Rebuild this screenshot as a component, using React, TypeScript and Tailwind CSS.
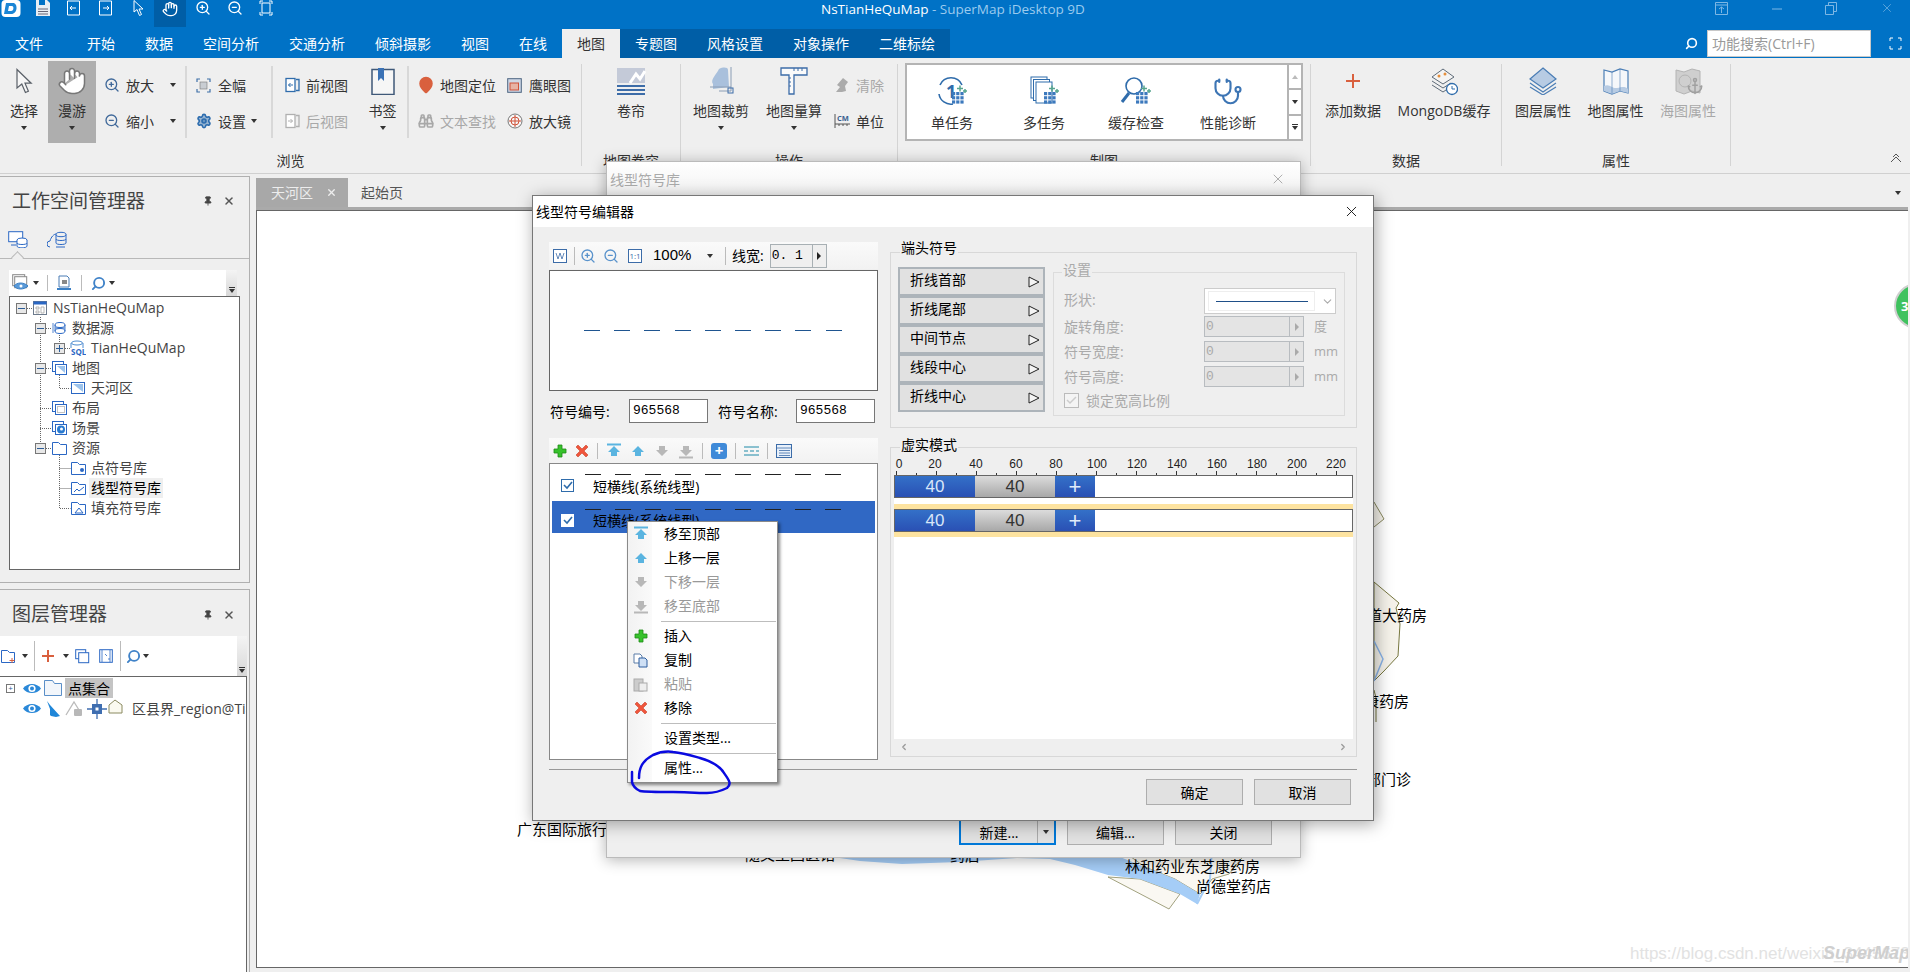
import type { ReactNode } from 'react';
import { Anchor, Binoculars, ChevronDown, ChevronLeft, ChevronRight, Hand, MapPin, Pin, Search, Settings, Stethoscope, X, ZoomIn, ZoomOut } from 'lucide-react';

function Caret({ white }: { white?: boolean }) {
  return <span className={`inline-block h-0 w-0 border-x-[3px] border-t-[4px] border-x-transparent ${white ? 'border-t-white' : 'border-t-[#333]'}`} />;
}

function Svg({ s = 16, h, vb, children, className }: { s?: number; h?: number; vb?: string; children: ReactNode; className?: string }) {
  const height = h ?? s;
  return (
    <svg width={s} height={height} viewBox={vb ?? `0 0 ${s} ${height}`} fill="none" className={`shrink-0 ${className ?? ''}`}>
      {children}
    </svg>
  );
}

/* ---------- ribbon ---------- */

function Sep() {
  return <div className="mt-[6px] h-[102px] w-px shrink-0 bg-[#d4d4d4]" />;
}

function InnerSep() {
  return <div className="mt-[8px] h-[72px] w-[2px] shrink-0 bg-[#d8d8d8]" />;
}

function Group({ w, label, children }: { w: string; label: string; children: ReactNode }) {
  return (
    <div className={`flex shrink-0 flex-col ${w}`}>
      <div className="flex h-[90px]">{children}</div>
      <div className="flex h-[26px] items-center justify-center text-[14px] text-[#333]">{label}</div>
    </div>
  );
}

function BigBtn({ w, label, icon, caret, off, on }: { w: string; label: string; icon: ReactNode; caret?: boolean; off?: boolean; on?: boolean }) {
  return (
    <div className={`mt-[3px] flex h-[82px] shrink-0 flex-col items-center ${w} ${on ? 'bg-[#aeaeae]' : ''}`}>
      <div className="mt-[2px] flex h-[36px] items-center justify-center">{icon}</div>
      <div className={`flex h-[22px] items-center whitespace-nowrap text-[14px] ${off ? 'text-[#a8a8a8]' : 'text-[#333]'}`}>{label}</div>
      {caret && <div className="flex h-[14px] items-center"><Caret /></div>}
    </div>
  );
}

function SmallBtn({ label, icon, off, caretLeft, w }: { label: string; icon: ReactNode; off?: boolean; caretLeft?: string; w: string }) {
  return (
    <div className={`flex h-[36px] items-center whitespace-nowrap text-[14px] ${w} ${off ? 'text-[#a8a8a8]' : 'text-[#333]'}`}>
      <div className="flex w-[18px] shrink-0 justify-center">{icon}</div>
      <span className="ml-[5px]">{label}</span>
      {caretLeft && <span className={`flex ${caretLeft}`}><Caret /></span>}
    </div>
  );
}

function DocArrow({ dir, c }: { dir: 'l' | 'r'; c: string }) {
  return (
    <Svg s={15} h={16}>
      <rect x="1" y="1.5" width="9" height="13" stroke={c} strokeWidth="1.3" fill="#fff" />
      <path d="M11 2.5h3v11h-3" stroke={c} strokeWidth="1.3" />
      <path d={dir === 'l' ? 'M8 8H3.5M5.5 6L3.5 8l2 2' : 'M3 8h4.5M5.5 6l2 2-2 2'} stroke={c} strokeWidth="1" />
    </Svg>
  );
}

function Dots() {
  return (
    <g>
      {[0, 1, 2].map((r) => [0, 1, 2].map((c) => <rect key={`${r}${c}`} x={16 + c * 4.2} y={16 + r * 4.2} width="3.2" height="3.2" fill="#3c79bd" />))}
      <path d="M24 9.5v6M21 12.5h6M29 13v4M27 15h4" stroke="#57a58f" strokeWidth="1.5" />
    </g>
  );
}

function Ribbon() {
  return (
    <div className="flex h-[116px] shrink-0 border-b border-[#d0d0d0] bg-[#efefef]">
      <Group w="w-[581px]" label="浏览">
        <BigBtn
          w="w-[48px]"
          label="选择"
          caret
          icon={
            <Svg s={18} h={26}>
              <path d="M2 1.5V20l4.8-4 3.6 8.5 3-1.3-3.4-8h6.2z" fill="#f6f6f6" stroke="#5a6068" strokeWidth="1.2" />
            </Svg>
          }
        />
        <BigBtn w="w-[48px]" label="漫游" caret on icon={<Hand size={30} fill="#fff" stroke="#777" strokeWidth={1.2} />} />
        <div className="ml-[7px] flex w-[83px] flex-col pt-[9px]">
          <SmallBtn w="w-full" label="放大" icon={<ZoomIn size={16} color="#40699a" />} caretLeft="ml-[16px]" />
          <SmallBtn w="w-full" label="缩小" icon={<ZoomOut size={16} color="#40699a" />} caretLeft="ml-[16px]" />
        </div>
        <InnerSep />
        <div className="ml-[8px] flex w-[77px] flex-col pt-[9px]">
          <SmallBtn
            w="w-full"
            label="全幅"
            icon={
              <Svg s={15}>
                <path d="M1 4V1h3M11 1h3v3M14 11v3h-3M4 14H1v-3" stroke="#3f70a8" strokeWidth="1.2" />
                <rect x="4" y="4" width="7" height="7" fill="#c9cdd2" stroke="#777" strokeWidth=".6" />
              </Svg>
            }
          />
          <SmallBtn w="w-full" label="设置" icon={<Settings size={16} color="#2c6cae" fill="#2c6cae" fillOpacity={0.45} strokeWidth={2.4} />} caretLeft="ml-[5px]" />
        </div>
        <InnerSep />
        <div className="ml-[10px] flex w-[76px] flex-col pt-[9px]">
          <SmallBtn w="w-full" label="前视图" icon={<DocArrow dir="l" c="#2f6cab" />} />
          <SmallBtn w="w-full" label="后视图" off icon={<DocArrow dir="r" c="#b0b0b0" />} />
        </div>
        <BigBtn
          w="w-[49px]"
          label="书签"
          caret
          icon={
            <Svg s={24} h={27}>
              <rect x="1" y="1.5" width="22" height="25" fill="#f6f6f6" stroke="#3f5878" strokeWidth="1.5" />
              <path d="M7 0h6v13l-3-3-3 3z" fill="#3b72b5" />
            </Svg>
          }
        />
        <InnerSep />
        <div className="ml-[8px] flex w-[90px] flex-col pt-[9px]">
          <SmallBtn w="w-full" label="地图定位" icon={<MapPin size={18} color="#d9603e" fill="#d9603e" stroke="#d9603e" />} />
          <SmallBtn w="w-full" label="文本查找" off icon={<Binoculars size={16} color="#a8a8a8" strokeWidth={2.5} />} />
        </div>
        <div className="flex w-[76px] flex-col pt-[9px]">
          <SmallBtn
            w="w-full"
            label="鹰眼图"
            icon={
              <Svg s={15}>
                <rect x=".7" y=".7" width="13.6" height="13.6" fill="#cfd8e6" stroke="#4d6480" />
                <rect x="3" y="5" width="8.5" height="7" fill="#e7b3a5" stroke="#d0533a" />
              </Svg>
            }
          />
          <SmallBtn
            w="w-full"
            label="放大镜"
            icon={
              <Svg s={16}>
                <circle cx="8" cy="8" r="7" stroke="#777" fill="#f6f6f6" />
                <circle cx="8" cy="8" r="4" stroke="#d0533a" />
                <path d="M8 2v12M2 8h12" stroke="#d0533a" />
              </Svg>
            }
          />
        </div>
      </Group>
      <Sep />
      <Group w="w-[98px]" label="地图卷帘">
        <BigBtn
          w="w-full"
          label="卷帘"
          icon={
            <Svg s={30} h={28}>
              <rect x="1" y="1" width="28" height="15" fill="#c4cad8" />
              <path d="M14 16l6-9 4 5 5-8" stroke="#fff" strokeWidth="3" />
              <path d="M1 19h28M1 23h28M1 27h28" stroke="#3c6ca8" strokeWidth="2" />
            </Svg>
          }
        />
      </Group>
      <Sep />
      <Group w="w-[216px]" label="操作">
        <div className="ml-[3px] w-[74px]">
          <BigBtn
            w="w-full"
            label="地图裁剪"
            caret
            icon={
              <Svg s={28} h={30}>
                <path d="M6 18C3 14 9 9 12 3c4-2 9-2 9 1l1 17-16 2z" fill="#a9c0dc" />
                <path d="M24 1v24M12 25h12M3 21h21" stroke="#8a9db5" strokeWidth="1" />
                <rect x="21" y="22" width="5" height="5" stroke="#3c6ca8" />
              </Svg>
            }
          />
        </div>
        <div className="w-[72px]">
          <BigBtn
            w="w-full"
            label="地图量算"
            caret
            icon={
              <Svg s={28} h={30}>
                <path d="M1 2h26v7H14v19h-5V9H1z" fill="#fafafa" stroke="#3c6ca8" strokeWidth="1.3" />
                <path d="M14 2v3M18 2v3M22 2v3M9 12h2M9 16h2M9 20h2" stroke="#3c6ca8" />
              </Svg>
            }
          />
        </div>
        <div className="ml-[3px] flex w-[57px] flex-col pt-[9px]">
          <SmallBtn
            w="w-full"
            label="清除"
            off
            icon={
              <Svg s={16}>
                <path d="M9 1l5 4-3 4 1 5-4 1H2l4-5-3-2z" fill="#ababab" />
              </Svg>
            }
          />
          <SmallBtn
            w="w-full"
            label="单位"
            icon={
              <Svg s={16} h={16}>
                <text x="3" y="8" fontSize="7.5" fontWeight="700" fill="#3a5f8f">CM</text>
                <path d="M1 1v14M1 11h15M5 11v2M9 11v2M13 11v2" stroke="#555" />
              </Svg>
            }
          />
        </div>
      </Group>
      <Sep />
      <Group w="w-[412px]" label="制图">
        <div className="ml-[7px] mt-[5px] flex h-[78px] w-[398px] border-2 border-[#b4b4b4] bg-white">
          <div className="flex w-[382px]">
            <GalleryItem w="w-[92px]" label="单任务" ml="ml-[-1px]" icon={
              <Svg s={32}>
                <path d="M4 9a12 12 0 0 1 22 0M3 18a12 12 0 0 0 14 10" stroke="#2f6cab" strokeWidth="1.6" />
                <text x="10" y="22" fontSize="18" fontWeight="700" fill="#2f6cab">1</text>
                <Dots />
              </Svg>
            } />
            <GalleryItem w="w-[92px]" label="多任务" icon={
              <Svg s={32}>
                <rect x="3" y="1" width="16" height="21" stroke="#2f6cab" fill="#fff" />
                <rect x="5.5" y="3.5" width="16" height="21" stroke="#2f6cab" fill="#fff" />
                <rect x="8" y="6" width="16" height="21" stroke="#2f6cab" fill="#fff" />
                <Dots />
              </Svg>
            } />
            <GalleryItem w="w-[92px]" label="缓存检查" icon={
              <Svg s={32}>
                <circle cx="14" cy="10" r="8" stroke="#2f6cab" strokeWidth="1.6" />
                <path d="M9 17L2 26" stroke="#2f6cab" strokeWidth="3" />
                <Dots />
              </Svg>
            } />
            <GalleryItem w="w-[92px]" label="性能诊断" icon={<Stethoscope size={30} color="#3d75b4" strokeWidth={1.7} />} />
          </div>
          <div className="flex w-[14px] flex-col border-l-2 border-[#b4b4b4]">
            <div className="flex flex-1 items-center justify-center"><span className="h-0 w-0 border-x-[3px] border-b-[4px] border-x-transparent border-b-[#bbb]" /></div>
            <div className="flex flex-1 items-center justify-center border-t-2 border-[#b4b4b4]"><Caret /></div>
            <div className="flex flex-1 flex-col items-center justify-center border-t-2 border-[#b4b4b4]"><span className="mb-px h-px w-[6px] bg-[#333]" /><Caret /></div>
          </div>
        </div>
      </Group>
      <Sep />
      <Group w="w-[190px]" label="数据">
        <BigBtn w="w-[84px]" label="添加数据" icon={<Svg s={16}><path d="M8 1v14M1 8h14" stroke="#d9603e" strokeWidth="2" /></Svg>} />
        <BigBtn
          w="w-[98px]"
          label="MongoDB缓存"
          icon={
            <Svg s={28} h={30}>
              <path d="M2 11l11-8 11 8-11 7z" stroke="#5e6b78" fill="#f4f4f4" />
              <path d="M2 15l11 7 8-5M2 19l11 7 6-4" stroke="#5e6b78" />
              <circle cx="9" cy="10" r="1.5" fill="#e58f3c" />
              <circle cx="15" cy="8" r="1.5" fill="#e58f3c" />
              <circle cx="22" cy="23" r="5.5" fill="#fff" stroke="#2f6cab" strokeWidth="1.3" />
              <path d="M22 20v3h3" stroke="#2f6cab" />
            </Svg>
          }
        />
      </Group>
      <Sep />
      <Group w="w-[228px]" label="属性">
        <div className="w-[6px]" />
        <BigBtn
          w="w-[70px]"
          label="图层属性"
          icon={
            <Svg s={28} h={28}>
              <path d="M14 1l13 11-13 9L1 12z" fill="#b7cbe3" stroke="#4a7db5" strokeWidth="1.2" />
              <path d="M1 16l13 9 13-9M1 20l13 8 13-8" stroke="#4a7db5" strokeWidth="1.2" />
            </Svg>
          }
        />
        <BigBtn
          w="w-[75px]"
          label="地图属性"
          icon={
            <Svg s={26} h={28}>
              <path d="M1 3l8 2 8-3 8 2v22l-8-2-8 3-8-3z" fill="#f5f7fa" stroke="#4a7db5" strokeWidth="1.2" />
              <path d="M1 19c6-3 8 3 13 2s8-2 11 1v4l-8-2-8 3-8-3z" fill="#b7cbe3" />
              <path d="M9 5v22M17 2v22" stroke="#4a7db5" strokeWidth=".6" />
            </Svg>
          }
        />
        <BigBtn
          w="w-[70px]"
          label="海图属性"
          off
          icon={
            <span className="relative flex">
              <Svg s={26} h={28}>
                <path d="M1 3l8 2 8-3 8 2v22l-8-2-8 3-8-3z" fill="#cfcfcf" stroke="#b4b4b4" />
                <circle cx="10" cy="14" r="6" stroke="#b4b4b4" />
              </Svg>
              <Anchor size={18} color="#a0a0a0" strokeWidth={2} className="absolute -right-[3px] bottom-0" />
            </span>
          }
        />
      </Group>
      <Sep />
      <div className="ml-auto mr-[7px] mt-[94px] flex h-[12px] w-[14px] items-center justify-center text-[#555]">
        <Svg s={12} h={10}>
          <path d="M1 9l5-5 5 5M3 4l3-3 3 3" stroke="#555" />
        </Svg>
      </div>
    </div>
  );
}

function GalleryItem({ w, label, icon, ml }: { w: string; label: string; icon: ReactNode; ml?: string }) {
  return (
    <div className={`flex flex-col items-center ${w} ${ml ?? ''}`}>
      <div className="mt-[12px] flex h-[30px] items-center">{icon}</div>
      <div className="mt-[5px] text-[14px] text-[#333]">{label}</div>
    </div>
  );
}

/* ---------- left panels ---------- */

const B = '#2a67c4';

const treeIcons: Record<string, ReactNode> = {
  workspace: (
    <Svg s={14}>
      <rect x=".5" y=".5" width="13" height="13" fill="#fff" stroke="#6c7a8c" />
      <rect x=".5" y=".5" width="13" height="3" fill={B} />
      <path d="M3 6h3v2H3zM3 10h3v2H3zM8 6h3v6H8z" stroke="#999" strokeWidth=".7" />
    </Svg>
  ),
  source: (
    <Svg s={14}>
      <ellipse cx="8" cy="4" rx="5" ry="2.5" stroke={B} />
      <ellipse cx="8" cy="10" rx="5" ry="2.5" stroke={B} />
      <path d="M3 7h10M3 4v6M13 4v6M1 2v10" stroke={B} strokeWidth=".8" />
    </Svg>
  ),
  sql: (
    <Svg s={16}>
      <ellipse cx="7" cy="3" rx="5.5" ry="2" stroke="#4c8bd0" />
      <text x="1" y="15" fontSize="8" fontWeight="700" fill={B}>SQL</text>
      <path d="M1 3v5M13 3v5" stroke="#4c8bd0" />
    </Svg>
  ),
  maps: (
    <Svg s={15}>
      <rect x=".5" y=".5" width="11" height="10" stroke={B} />
      <rect x="3.5" y="3.5" width="11" height="10" fill="#fff" stroke={B} />
      <path d="M5 5h8v7z" fill="#9cc3ec" />
    </Svg>
  ),
  map: (
    <Svg s={15}>
      <rect x=".5" y="1.5" width="13" height="11" fill="#fff" stroke={B} />
      <path d="M2 3h10v8z" fill="#9cc3ec" />
    </Svg>
  ),
  layout: (
    <Svg s={15}>
      <rect x=".5" y=".5" width="11" height="10" stroke={B} />
      <rect x="3.5" y="3.5" width="11" height="10" fill="#fff" stroke={B} />
      <rect x="5.5" y="5.5" width="7" height="6" stroke="#555" strokeWidth=".7" strokeDasharray="1 1" />
    </Svg>
  ),
  scene: (
    <Svg s={15}>
      <rect x=".5" y=".5" width="11" height="10" stroke={B} />
      <rect x="3.5" y="3.5" width="11" height="10" fill="#fff" stroke={B} />
      <circle cx="9" cy="8.5" r="4" fill="#2a7ad0" />
      <circle cx="9.5" cy="8" r="1.5" fill="#fff" />
    </Svg>
  ),
  folder: (
    <Svg s={15}>
      <path d="M.5 13.5V1.5h6l2 2h6v10z" fill="#fff" stroke={B} />
    </Svg>
  ),
  point: (
    <Svg s={15}>
      <path d="M.5 13.5V1.5h6l2 2h6v10z" fill="#fff" stroke={B} />
      <circle cx="11" cy="9" r="2" fill={B} />
    </Svg>
  ),
  line: (
    <Svg s={15}>
      <path d="M.5 13.5V1.5h6l2 2h6v10z" fill="#fff" stroke={B} />
      <path d="M3 11l3-3 2 2 5-4" stroke={B} />
    </Svg>
  ),
  fill: (
    <Svg s={15}>
      <path d="M.5 13.5V1.5h6l2 2h6v10z" fill="#fff" stroke={B} />
      <path d="M4 12l4-5 4 5z" fill="#fff" stroke={B} />
    </Svg>
  ),
};

const tree = [
  { level: 0, exp: '-', icon: 'workspace', text: 'NsTianHeQuMap' },
  { level: 1, exp: '-', icon: 'source', text: '数据源' },
  { level: 2, exp: '+', icon: 'sql', text: 'TianHeQuMap' },
  { level: 1, exp: '-', icon: 'maps', text: '地图' },
  { level: 2, exp: '', icon: 'map', text: '天河区' },
  { level: 1, exp: '', icon: 'layout', text: '布局' },
  { level: 1, exp: '', icon: 'scene', text: '场景' },
  { level: 1, exp: '-', icon: 'folder', text: '资源' },
  { level: 2, exp: '', icon: 'point', text: '点符号库' },
  { level: 2, exp: '', icon: 'line', text: '线型符号库', selected: true },
  { level: 2, exp: '', icon: 'fill', text: '填充符号库' },
];

const indents = ['pl-[5px]', 'pl-[24px]', 'pl-[43px]'];

function Expander({ sign }: { sign: string }) {
  return (
    <span className="relative flex h-[11px] w-[11px] items-center justify-center border border-[#777] bg-[#e8e8e8]">
      <span className="h-px w-[7px] bg-[#2c5c96]" />
      {sign === '+' && <span className="absolute h-[7px] w-px bg-[#2c5c96]" />}
    </span>
  );
}

function PanelHead({ title, h }: { title: string; h: string }) {
  return (
    <div className={`flex shrink-0 items-center pl-[12px] pr-[14px] ${h}`}>
      <span className="text-[19px] text-[#444]">{title}</span>
      <Pin size={10} className="ml-auto rotate-0" color="#444" fill="#444" />
      <X size={12} className="ml-[10px]" color="#555" strokeWidth={3} />
    </div>
  );
}

function LeftPanels() {
  return (
    <div className="flex w-[250px] shrink-0 flex-col">
      <div className="mt-[2px] flex h-[407px] flex-col border-r border-t border-b border-[#b0b0b0]">
        <PanelHead title="工作空间管理器" h="h-[48px]" />
        <div className="relative flex h-[34px] shrink-0 gap-[19px] border-b border-[#b8b8b8] pl-[8px] pt-[6px]">
          <Svg s={20} h={17}>
            <rect x=".7" y=".7" width="14" height="10" stroke={B} fill="#fff" />
            <ellipse cx="14" cy="9" rx="5" ry="2" fill="#fff" stroke={B} />
            <path d="M9 9v6c0 2.5 10 2.5 10 0V9M9 12c0 2 10 2 10 0" stroke={B} fill="#fff" />
            <path d="M3 14h5" stroke={B} />
          </Svg>
          <Svg s={20} h={17}>
            <path d="M3 16a3 3 0 0 1 0-6c1-4 4-7 6-7M9 16h9" stroke={B} />
            <ellipse cx="14" cy="3.5" rx="5" ry="2.2" stroke={B} />
            <path d="M9 3.5V12c0 2 10 2 10 0V3.5M9 8c0 2 10 2 10 0" stroke={B} />
          </Svg>
          <span className="absolute left-[13px] top-[28px] h-[9px] w-[9px] rotate-45 border-l border-t border-[#b8b8b8] bg-[#efefef]" />
        </div>
        <div className="mx-[9px] mt-[11px] flex h-[26px] shrink-0">
          <div className="flex w-[217px] items-center gap-[3px] bg-white pl-[3px]">
            <Svg s={18}>
              <rect x=".7" y=".7" width="12" height="11" stroke="#888" />
              <rect x="2.7" y="2.7" width="12" height="11" stroke="#888" fill="#fff" />
              <path d="M2 12c3-4 10-4 14 0-4 4-11 4-14 0z" fill="#5a9ad8" stroke="#3a7fc5" />
              <circle cx="9" cy="12" r="1.5" fill="#fff" />
            </Svg>
            <Caret />
            <div className="mx-[5px] h-[16px] w-px bg-[#bbb]" />
            <Svg s={16}>
              <path d="M3 1h8l2 2v9H3z" fill="#fff" stroke="#4a7db5" />
              <rect x="6" y="5" width="5" height="4" fill="#888" />
              <path d="M1 14h14" stroke="#3a7fc5" strokeWidth="2" />
            </Svg>
            <div className="mx-[6px] h-[16px] w-px bg-[#bbb]" />
            <Search size={15} color="#3f82c8" strokeWidth={3} className="-scale-x-100" />
            <Caret />
          </div>
          <div className="flex w-[11px] flex-col items-center justify-end bg-gradient-to-b from-[#f4f4f4] to-[#d8d8d8] pb-[3px]">
            <span className="mb-px h-px w-[6px] bg-[#333]" />
            <Caret />
          </div>
        </div>
        <div className="relative mx-[9px] h-[274px] shrink-0 border border-[#666] bg-white pt-px">
          <svg className="absolute left-0 top-0" width="226" height="272" fill="none">
            <path
              d="M17 11.5h5M30.5 20V146M36 31.5h5M36 71.5h5M36 151.5h5M30 111.5h11M30 131.5h11M49.5 38v8M55 51.5h5M49.5 78v13.5h11M49.5 158v53.5h11M49.5 171.5h11M49.5 191.5h11"
              stroke="#666"
              strokeDasharray="1 1"
            />
          </svg>
          {tree.map((r) => (
            <div key={r.text} className={`relative flex h-[20px] items-center ${indents[r.level]}`}>
              <span className="flex w-[12px] shrink-0 justify-center">{r.exp && <Expander sign={r.exp} />}</span>
              <span className="ml-[5px] flex w-[16px] shrink-0 justify-center">{treeIcons[r.icon]}</span>
              <span className={`ml-[3px] px-[2px] text-[14px] leading-[20px] ${r.selected ? 'bg-[#efefef] text-black' : 'text-[#444]'}`}>{r.text}</span>
            </div>
          ))}
        </div>
      </div>
      <div className="mt-[6px] flex flex-1 flex-col overflow-hidden border-r border-t border-[#b0b0b0]">
        <PanelHead title="图层管理器" h="h-[46px] pt-[3px]" />
        <div className="flex h-[40px] shrink-0">
          <div className="flex w-[237px] items-center bg-white">
            <Svg s={15} className="ml-px">
              <path d="M.5 13.5V1.5h6l2 2h5v10z" stroke={B} />
              <path d="M11 9v5M8.5 11.5h5" stroke="#d9603e" />
            </Svg>
            <span className="ml-[6px] flex"><Caret /></span>
            <div className="ml-[6px] h-[30px] w-px bg-[#bbb]" />
            <Svg s={14} className="ml-[6px]"><path d="M7 1v12M1 7h12" stroke="#d9603e" strokeWidth="2" /></Svg>
            <span className="ml-[8px] flex"><Caret /></span>
            <Svg s={15} className="ml-[6px]">
              <rect x=".7" y=".7" width="10" height="9" stroke={B} />
              <rect x="3.7" y="3.7" width="10" height="10" fill="#fff" stroke={B} />
            </Svg>
            <Svg s={14} className="ml-[9px]">
              <rect x=".7" y=".7" width="12.6" height="12.6" stroke={B} />
              <path d="M3 1v12M11 1v12M6 5l2 2M10 9v2" stroke={B} strokeWidth=".8" />
            </Svg>
            <div className="ml-[7px] h-[30px] w-px bg-[#bbb]" />
            <Search size={15} color="#3f82c8" strokeWidth={3} className="ml-[5px] -scale-x-100" />
            <span className="ml-[2px] flex"><Caret /></span>
          </div>
          <div className="flex w-[10px] flex-col items-center justify-end bg-gradient-to-b from-[#f4f4f4] to-[#d8d8d8] pb-[3px]">
            <span className="mb-px h-px w-[6px] bg-[#333]" />
            <Caret />
          </div>
        </div>
        <div className="w-[247px] flex-1 overflow-hidden border-r border-t border-[#666] bg-white pt-px">
          <div className="flex h-[20px] items-center">
            <span className="ml-[6px] flex h-[9px] w-[9px] items-center justify-center border border-[#777] text-[8px] leading-none text-[#2c5c96]">+</span>
            <span className="ml-[7px] flex"><LayerEye /></span>
            <Svg s={18} className="ml-[2px]"><path d="M.5 16.5V1.5h8l2 3h7v12z" fill="#f2f6fb" stroke="#5a8fc8" /></Svg>
            <span className="ml-[3px] h-[20px] bg-[#c4c4c4] px-[3px] text-[14px] leading-[22px] text-black">点集合</span>
          </div>
          <div className="flex h-[21px] items-center">
            <span className="ml-[22px] flex"><LayerEye /></span>
            <Svg s={16} className="ml-[3px]"><path d="M2 0l3 4 10 11-4 1-5-1-1-1V8z" fill="#1f86d8" /></Svg>
            <Svg s={18} className="ml-[4px]">
              <path d="M1 15l8-13 5 8" stroke="#bbb" strokeWidth="1.3" />
              <rect x="9" y="9" width="8" height="7" rx="1" fill="#b8b8b8" />
            </Svg>
            <Svg s={20} className="ml-[4px]">
              <path d="M10 0v20M0 10h20" stroke="#3f6eb0" strokeWidth="1.3" />
              <rect x="5" y="5" width="10" height="10" fill="#3f6eb0" />
              <rect x="8.5" y="8.5" width="3" height="3" fill="#fff" />
            </Svg>
            <Svg s={15} className="ml-[1px] -mt-[5px]"><path d="M1 14V6l6-5 7 5v8z" fill="#fbfaf0" stroke="#8a8a60" /></Svg>
            <span className="ml-[9px] whitespace-nowrap text-[14px] text-[#444]">区县界_region@TianHeQuMap</span>
          </div>
        </div>
      </div>
    </div>
  );
}

function LayerEye() {
  return (
    <Svg s={20} h={13}>
      <path d="M1 6.5C5 .5 15 .5 19 6.5 15 12.5 5 12.5 1 6.5z" fill="#2a88d8" />
      <circle cx="10" cy="6.5" r="3.6" fill="#fff" />
      <circle cx="10" cy="6.5" r="2" fill="#2a88d8" />
    </Svg>
  );
}

/* ---------- map canvas ---------- */

function MapCanvas() {
  return (
    <div className="relative flex-1 overflow-hidden border-l border-t border-b border-[#666] bg-white">
      <svg className="absolute left-0 top-0" width="1651" height="756" viewBox="257 212 1651 756" fill="none">
        <path d="M1120 850l25 18 30 12 25 15 5-5 7-10 17-5 20-25z" fill="#faf8f2" stroke="#8a8a60" strokeWidth=".8" />
        <path d="M1108 878l61 32 11-15-40-15z" fill="#faf8f2" stroke="#8a8a60" strokeWidth=".8" />
        <path d="M833 850v8l27 4 42 3 57-2 58-4 33 1 25 6 33 10 32 4 40 15 17 10 3-10-25-15-30-12-25-10-10-10z" fill="#a5cdf7" />
        <path d="M1212 850l-2 30-13 25" stroke="#a5cdf7" strokeWidth="2" />
        <path d="M1374 503l10 17-10 8" fill="#f5f2ea" stroke="#8a8a60" />
        <path d="M1374 583l25 21-3 5 4 16-2 32-14 15-10 10z" fill="#f5f2ea" stroke="#77773f" />
        <path d="M1374 642l9 18-9 22" stroke="#8ab4e8" strokeWidth="1.5" />
        <path d="M1374 691l2 8v24" stroke="#77773f" />
        <g fontSize="15" fill="#000">
          <text x="517" y="836">广东国际旅行社</text>
          <text x="745" y="861">随文里国医馆</text>
          <text x="950" y="862">药店</text>
          <text x="1125" y="873">林和药业东芝康药房</text>
          <text x="1196" y="893">尚德堂药店</text>
          <text x="1367" y="622">道大药房</text>
          <text x="1364" y="708">康药房</text>
          <text x="1366" y="786">部门诊</text>
        </g>
        <text x="1630" y="960" fontSize="17" fill="#e2e2e2" className="font-['Liberation_Sans',sans-serif]">https://blog.csdn.net/weixin_34456739</text>
        <text x="1823" y="960" fontSize="18" fontStyle="italic" fontWeight="700" fill="#cfcfcf" className="font-['Liberation_Sans',sans-serif]">SuperMap</text>
        <circle cx="1917" cy="307" r="22" fill="#3fc25e" stroke="#cfcfcf" strokeWidth="2" />
        <text x="1901" y="312" fontSize="13" fontWeight="700" fill="#fff">33</text>
      </svg>
    </div>
  );
}

/* ---------- dialogs ---------- */

function DlgBtn({ label, w = 'w-[97px]', h = 'h-[26px]' }: { label: string; w?: string; h?: string }) {
  return <div className={`flex items-center justify-center border border-[#adadad] bg-[#e1e1e1] text-[14px] text-black ${w} ${h}`}>{label}</div>;
}

function BackDialog() {
  return (
    <div className="absolute left-[606px] top-[161px] flex h-[697px] w-[695px] flex-col justify-between border border-[#bbb] bg-[#efefef] shadow-[0_2px_14px_rgba(0,0,0,0.3)]">
      <div className="flex h-[34px] items-center bg-gradient-to-b from-white to-[#f2f2f2] pl-[3px] pr-[14px] text-[14px] text-[#aaa]">
        线型符号库
        <X size={16} strokeWidth={1} color="#888" className="ml-auto" />
      </div>
      <div className="mb-[12px] mr-[28px] flex justify-end gap-[11px]">
        <div className="flex h-[26px] w-[97px] border-2 border-[#0078d7] bg-[#e1e1e1] text-[14px]">
          <span className="flex flex-1 items-center justify-center">新建...</span>
          <span className="flex w-[17px] items-center justify-center border-l border-[#aaa]"><Caret /></span>
        </div>
        <DlgBtn label="编辑..." />
        <DlgBtn label="关闭" />
      </div>
    </div>
  );
}

function ToolMove({ kind, c }: { kind: 'top' | 'up' | 'down' | 'bottom'; c: string }) {
  const up = kind === 'top' || kind === 'up';
  return (
    <Svg s={16}>
      {kind === 'top' && <path d="M1 1.5h14" stroke={c} strokeWidth="2" />}
      {kind === 'bottom' && <path d="M1 14.5h14" stroke={c} strokeWidth="2" />}
      <path d={up ? 'M8 3l6 6h-3v4H5V9H2z' : 'M8 13l6-6h-3V3H5v4H2z'} fill={c} />
    </Svg>
  );
}

const GreenPlus = () => (
  <Svg s={14}><path d="M5 1h4v4h4v4H9v4H5V9H1V5h4z" fill="#37c22c" stroke="#1f8a18" strokeWidth=".8" /></Svg>
);
const RedCross = () => (
  <Svg s={14}><path d="M1 3l2-2 4 4 4-4 2 2-4 4 4 4-2 2-4-4-4 4-2-2 4-4z" fill="#f0553c" stroke="#c8442c" strokeWidth=".6" /></Svg>
);

function Check({ on }: { on?: boolean }) {
  return (
    <Svg s={13} className="mt-[4px]">
      <rect x=".5" y=".5" width="12" height="12" fill={on ? '#fff' : 'none'} stroke={on ? '#fff' : '#2f6cab'} />
      <path d="M3 6l3 3 5-6" stroke="#2f6cab" strokeWidth="1.6" />
    </Svg>
  );
}

function LineDash() {
  return <div className="h-px w-[257px] bg-[repeating-linear-gradient(90deg,#222_0,#222_16px,transparent_16px,transparent_30px)]" />;
}

function EndButton({ label }: { label: string }) {
  return (
    <div className="flex h-[29px] w-[147px] items-center justify-between border-2 border-[#adb4ba] bg-[#e1e1e1] pl-[10px] pr-[3px] text-[14px] leading-[26px] text-black">
      <span className="-mt-[3px]">{label}</span>
      <Svg s={12}><path d="M1 1l10 5-10 5z" stroke="#222" fill="#f4f4f4" /></Svg>
    </div>
  );
}

function SpinField({ label, unit }: { label: string; unit: string }) {
  return (
    <div className="flex h-[25px] items-center">
      <span className="w-[140px] shrink-0 text-[14px] text-[#aaa]">{label}</span>
      <div className="flex h-[21px] w-[100px] items-center border border-[#b8bcc0] bg-[#e4e4e4] pl-px font-['Liberation_Mono',monospace] text-[13px] text-[#aaa]">
        <span className="flex-1">0</span>
        <span className="flex h-full w-[14px] items-center justify-center border-l border-[#b8bcc0]">
          <span className="h-0 w-0 border-y-[4px] border-l-[4px] border-y-transparent border-l-[#aaa]" />
        </span>
      </div>
      <span className="ml-[10px] text-[13px] text-[#aaa]">{unit}</span>
    </div>
  );
}

function Bar() {
  return (
    <div className="flex h-[23px] border border-[#666] bg-white font-['Liberation_Sans',sans-serif] text-[17px]">
      <div className="flex w-[80px] items-center justify-center bg-gradient-to-b from-[#3470c8] to-[#2a50b4] text-[#d8e6f8]">40</div>
      <div className="flex w-[80px] items-center justify-center bg-gradient-to-b from-[#dcdcdc] to-[#a8a8a8] text-[#333]">40</div>
      <div className="flex w-[40px] items-center justify-center bg-gradient-to-b from-[#3470c8] to-[#2a50b4] text-[22px] leading-none text-[#e0ecfa]">+</div>
    </div>
  );
}

function Ruler() {
  const numbers = [
    [0, 898], [20, 934], [40, 975], [60, 1015], [80, 1055], [100, 1096],
    [120, 1136], [140, 1176], [160, 1216], [180, 1256], [200, 1296], [220, 1335],
  ];
  const ticks = Array.from({ length: 23 }, (_, i) => 895 + i * 20);
  return (
    <svg width="465" height="21" viewBox="890 454 465 21" className="shrink-0" fill="none">
      {numbers.map(([n, x]) => (
        <text key={n} x={x} y="468" fontSize="12" textAnchor="middle" fill="#222" className="font-['Liberation_Sans',sans-serif]">{n}</text>
      ))}
      {ticks.map((x, i) => <path key={x} d={`M${x + 0.5} 475v${i % 2 ? -2 : -4}`} stroke="#333" />)}
    </svg>
  );
}

function FrontDialog() {
  return (
    <div className="absolute left-[532px] top-[195px] flex h-[626px] w-[842px] flex-col border border-[#777] bg-[#efefef] shadow-[2px_3px_16px_rgba(0,0,0,0.35)]">
      <div className="flex h-[31px] shrink-0 items-center bg-white pl-[3px] pr-[13px] text-[14px] text-black">
        线型符号编辑器
        <X size={17} strokeWidth={1.3} color="#111" className="ml-auto" />
      </div>
      <div className="flex h-[534px] shrink-0 pl-[16px]">
        {/* left column */}
        <div className="flex w-[329px] shrink-0 flex-col pt-[15px]">
          <div className="flex h-[27px] shrink-0 items-center bg-gradient-to-b from-[#fafafa] to-[#f2f2f2] pl-[4px] text-[14px]">
            <Svg s={14}>
              <rect x=".5" y=".5" width="13" height="13" fill="#fff" stroke="#3c6ca8" />
              <path d="M3 4l2 6 2-6 2 6 2-6" stroke="#3c6ca8" strokeWidth=".8" />
            </Svg>
            <div className="ml-[7px] h-[18px] w-px bg-[#bbb]" />
            <ZoomIn size={16} color="#5a93cc" className="ml-[5px]" />
            <ZoomOut size={16} color="#5a93cc" className="ml-[7px]" />
            <span className="ml-[9px] flex h-[14px] w-[14px] items-center justify-center border border-[#3c6ca8] bg-white text-[8px] text-[#3c6ca8]">1:1</span>
            <span className="ml-[11px] w-[54px] font-['Liberation_Sans',sans-serif] text-[15px] text-black">100%</span>
            <Caret />
            <div className="ml-[12px] h-[18px] w-px bg-[#bbb]" />
            <span className="ml-[6px] text-black">线宽:</span>
            <div className="ml-[6px] flex h-[24px] w-[57px] items-center border border-[#a8b0b4] bg-[#efefef] pl-px font-['Liberation_Mono',monospace] text-[13px]">
              <span className="flex-1">0. 1</span>
              <span className="flex h-full w-[14px] items-center justify-center border-l border-[#a8b0b4]">
                <span className="h-0 w-0 border-y-[4px] border-l-[4px] border-y-transparent border-l-[#222]" />
              </span>
            </div>
          </div>
          <div className="mt-px flex h-[121px] shrink-0 items-center border border-[#666] bg-white pl-[34px]">
            <div className="h-px w-[258px] bg-[repeating-linear-gradient(90deg,#1f5590_0,#1f5590_16px,transparent_16px,transparent_30.2px)]" />
          </div>
          <div className="mt-[8px] flex h-[24px] shrink-0 items-center text-[14px] text-black">
            <span className="ml-px w-[79px]">符号编号:</span>
            <span className="flex h-full w-[79px] items-center border border-[#777] bg-white pl-[3px] font-['Liberation_Mono',monospace] text-[13px]">965568</span>
            <span className="ml-[10px] w-[78px]">符号名称:</span>
            <span className="flex h-full w-[79px] items-center border border-[#777] bg-white pl-[3px] font-['Liberation_Mono',monospace] text-[13px]">965568</span>
          </div>
          <div className="mt-[15px] flex h-[25px] shrink-0 items-center gap-[8px] bg-gradient-to-b from-[#fafafa] to-[#f2f2f2] pl-[4px]">
            <GreenPlus />
            <RedCross />
            <div className="h-[16px] w-px bg-[#bbb]" />
            <ToolMove kind="top" c="#5ab4e0" />
            <ToolMove kind="up" c="#5ab4e0" />
            <ToolMove kind="down" c="#b8b8b8" />
            <ToolMove kind="bottom" c="#b8b8b8" />
            <div className="h-[16px] w-px bg-[#bbb]" />
            <span className="flex h-[16px] w-[16px] items-center justify-center rounded-[3px] bg-[#3f8ad8] text-[15px] font-bold leading-none text-white">+</span>
            <div className="h-[16px] w-px bg-[#bbb]" />
            <Svg s={15}><path d="M0 4h15M0 8h4M6 8h4M12 8h3M0 12h15" stroke="#1f8aa8" /></Svg>
            <div className="h-[16px] w-px bg-[#bbb]" />
            <Svg s={16}>
              <rect x=".5" y="1.5" width="15" height="13" fill="#e8f0fa" stroke="#3c6ca8" />
              <path d="M.5 5h15M3 7.5h11M3 10h11M3 12.5h11" stroke="#3c6ca8" strokeWidth=".8" />
            </Svg>
          </div>
          <div className="h-[297px] shrink-0 border border-[#888] bg-white px-[2px] pt-px">
            <div className="h-[36px]">
              <div className="pl-[33px] pt-[9px]"><LineDash /></div>
              <div className="flex pl-[9px]">
                <Check />
                <span className="ml-[19px] mt-[2px] text-[14px] leading-[20px] text-black">短横线(系统线型)</span>
              </div>
            </div>
            <div className="h-[32px] bg-[#3068c4]">
              <div className="pl-[33px] pt-[8px]"><LineDash /></div>
              <div className="flex pl-[9px]">
                <Check on />
                <span className="ml-[19px] mt-[1px] text-[14px] leading-[20px] text-black">短横线(系统线型)</span>
              </div>
            </div>
          </div>
        </div>
        {/* right column */}
        <div className="ml-[12px] flex w-[467px] shrink-0 flex-col">
          <div className="relative mt-[25px] flex h-[176px] shrink-0 border border-[#d8d8d8]">
            <span className="absolute -top-[15px] left-[9px] bg-[#efefef] px-px text-[14px] leading-[20px] text-black">端头符号</span>
            <div className="ml-[7px] mt-[14px] flex flex-col">
              {['折线首部', '折线尾部', '中间节点', '线段中心', '折线中心'].map((t) => <EndButton key={t} label={t} />)}
            </div>
            <div className="relative ml-[8px] mt-[19px] h-[144px] w-[292px] border border-[#dcdcdc] pl-[10px] pt-[15px]">
              <span className="absolute -top-[13px] left-[8px] bg-[#efefef] px-px text-[14px] leading-[20px] text-[#aaa]">设置</span>
              <div className="flex h-[26px] items-center">
                <span className="-mt-[3px] w-[140px] shrink-0 text-[14px] text-[#aaa]">形状:</span>
                <div className="flex h-[26px] w-[132px] items-center border border-[#ccc] bg-white pl-[3px]">
                  <div className="flex h-[20px] w-[107px] items-center justify-center border border-[#eee]">
                    <span className="h-px w-[92px] bg-[#1f4f88]" />
                  </div>
                  <ChevronDown size={13} color="#aaa" className="ml-[6px]" />
                </div>
              </div>
              <SpinField label="旋转角度:" unit="度" />
              <SpinField label="符号宽度:" unit="mm" />
              <SpinField label="符号高度:" unit="mm" />
              <div className="mt-[1px] flex h-[20px] items-center text-[14px] text-[#aaa]">
                <span className="flex h-[15px] w-[15px] items-center justify-center border border-[#bbb] bg-[#f4f4f4]">
                  <Svg s={11}><path d="M1 5l3 3 6-6" stroke="#ccc" strokeWidth="1.5" /></Svg>
                </span>
                <span className="ml-[7px]">锁定宽高比例</span>
              </div>
            </div>
          </div>
          <div className="relative mt-[19px] flex h-[310px] shrink-0 flex-col border border-[#d8d8d8] px-[3px] pt-[6px]">
            <span className="absolute -top-[13px] left-[9px] bg-[#efefef] px-px text-[14px] leading-[20px] text-black">虚实模式</span>
            <div className="-ml-[3px]"><Ruler /></div>
            <div className="h-[264px] w-[459px] shrink-0 bg-white">
              <Bar />
              <div className="mt-[6px] bg-[#fde3a0] py-[5px]"><Bar /></div>
            </div>
            <div className="flex h-[16px] w-[459px] shrink-0 items-center justify-between px-[5px]">
              <ChevronLeft size={10} color="#999" strokeWidth={3} />
              <ChevronRight size={10} color="#999" strokeWidth={3} />
            </div>
          </div>
        </div>
      </div>
      <div className="mx-[16px] mt-[8px] border-t border-[#999]" />
      <div className="flex justify-end gap-[11px] pr-[22px] pt-[9px]">
        <DlgBtn label="确定" />
        <DlgBtn label="取消" />
      </div>
    </div>
  );
}

const menuItems = [
  { t: '移至顶部', i: <ToolMove kind="top" c="#5ab4e0" /> },
  { t: '上移一层', i: <ToolMove kind="up" c="#5ab4e0" /> },
  { t: '下移一层', i: <ToolMove kind="down" c="#b8b8b8" />, off: true },
  { t: '移至底部', i: <ToolMove kind="bottom" c="#b8b8b8" />, off: true, sep: true },
  { t: '插入', i: <GreenPlus /> },
  {
    t: '复制',
    i: (
      <Svg s={15}>
        <path d="M1 1h6l2 2v7H1z" fill="#fff" stroke="#5a7ca8" />
        <path d="M6 5h6l2 2v7H6z" fill="#cfe0f5" stroke="#2f5f9f" />
      </Svg>
    ),
  },
  {
    t: '粘贴',
    i: (
      <Svg s={15}>
        <rect x="1" y="2" width="9" height="12" fill="#ccc" stroke="#aaa" />
        <rect x="6" y="6" width="8" height="8" fill="#eee" stroke="#aaa" />
      </Svg>
    ),
    off: true,
  },
  { t: '移除', i: <RedCross />, sep: true },
  { t: '设置类型...', sep: true },
  { t: '属性...' },
];

function ContextMenu() {
  return (
    <div className="absolute left-[627px] top-[521px] h-[262px] w-[151px] border border-[#8a8a8a] bg-white shadow-[2px_2px_3px_rgba(0,0,0,0.45)]">
      <div className="absolute bottom-0 left-0 top-0 w-[24px] bg-gradient-to-r from-[#f2f2f2] to-[#fafafa]" />
      {menuItems.map((m) => (
        <div key={m.t} className="relative">
          <div className={`flex h-[24px] items-center text-[14px] ${m.off ? 'text-[#999]' : 'text-black'}`}>
            <span className="flex w-[25px] shrink-0 justify-center">{m.i}</span>
            <span className="ml-[11px] -mt-[2px]">{m.t}</span>
          </div>
          {m.sep && (
            <div className="flex h-[6px] items-center pl-[33px] pr-px">
              <div className="h-px w-full bg-[#bdbdbd]" />
            </div>
          )}
        </div>
      ))}
    </div>
  );
}

export default function App() {
  return (
    <div className="relative flex h-[972px] w-[1910px] flex-col overflow-hidden bg-[#efefef] font-['Open_Sans','Noto_Sans_CJK_SC',sans-serif]">
      {/* Title bar */}
      <div className="flex h-[29px] shrink-0 items-start bg-[#0072c6] text-white">
        <div className="flex w-[821px] shrink-0 items-start">
          <Svg s={20} h={18} className="ml-px">
            <rect x=".5" y="0" width="19" height="17" rx="4" fill="#fff" />
            <path d="M5 3h7c5 0 5 11-2 11H3z" fill="#1b86d6" />
            <path d="M8 6h3c2 0 2 5-1 5H7z" fill="#fff" />
          </Svg>
          <Svg s={14} h={16} className="ml-[15px]">
            <path d="M0 0h11l3 3v13H0z" fill="#e8eef4" />
            <rect x="3" y="0" width="6" height="5" fill="#0072c6" />
            <path d="M2 9h10M2 11.5h10M2 14h10" stroke="#667" />
          </Svg>
          <Svg s={13} h={16} className="ml-[17px]"><path d="M.5 1h12v14H.5zM9 8H3M5 6L3 8l2 2" stroke="#fff" /></Svg>
          <Svg s={13} h={16} className="ml-[19px]"><path d="M.5 1h12v14H.5zM4 8h6M8 6l2 2-2 2" stroke="#fff" /></Svg>
          <Svg s={12} h={16} className="ml-[21px]"><path d="M1 .5V12l3-2.5 2.5 6 2-1L6 9h4z" stroke="#fff" /></Svg>
          <div className="ml-[9px] flex h-[27px] w-[32px] items-start justify-center bg-[#005ea6] pt-[1px]"><Hand size={16} color="#fff" /></div>
          <ZoomIn size={16} className="ml-[9px]" />
          <ZoomOut size={16} className="ml-[16px]" />
          <Svg s={14} h={16} className="ml-[16px]">
            <path d="M1 4V1h3M10 1h3v3M13 12v3h-3M4 15H1v-3" stroke="#fff" />
            <rect x="3" y="3" width="8" height="10" stroke="#fff" />
          </Svg>
        </div>
        <div className="mt-[-1px] whitespace-nowrap text-[13.5px]">
          NsTianHeQuMap <span className="text-[#9ccbee]">- SuperMap iDesktop 9D</span>
        </div>
        <div className="ml-auto flex items-start gap-[42px] pr-[16px] text-[#6fb0e2]">
          <Svg s={13} className="mt-[2px]"><path d="M.5.5h12v12H.5zM.5 3h12M6.5 11V5M4 7l2.5-2L9 7" stroke="#7db7e4" /></Svg>
          <Svg s={13} className="mt-[2px]"><path d="M2 7h10" stroke="#7db7e4" /></Svg>
          <Svg s={13} className="mt-[2px]"><path d="M3.5 3V.5h8v9H9M.5 3.5h8v9h-8z" stroke="#7db7e4" /></Svg>
          <X size={14} strokeWidth={1.2} color="#7db7e4" className="mt-[1px]" />
        </div>
      </div>
      {/* Tabs */}
      <div className="flex h-[29px] shrink-0 bg-[#0072c6] text-[14px] text-white">
        <div className="mr-[14px] flex items-center px-[15px]">文件</div>
        {['开始', '数据', '空间分析', '交通分析', '倾斜摄影', '视图', '在线'].map((t) => (
          <div key={t} className="flex items-center px-[15px]">{t}</div>
        ))}
        <div className="flex items-center bg-[#efefef] px-[15px] text-[#333]">地图</div>
        {['专题图', '风格设置', '对象操作', '二维标绘'].map((t) => (
          <div key={t} className="flex items-center bg-[#005ea6] px-[15px]">{t}</div>
        ))}
        <div className="ml-auto flex items-center pr-[8px]">
          <Search size={13} strokeWidth={3} className="-scale-x-100" />
          <div className="ml-[9px] flex h-[27px] w-[164px] items-center border border-[#c8c8c8] bg-white pl-[4px] text-[14px] text-[#999]">功能搜索(Ctrl+F)</div>
          <Svg s={13} className="ml-[18px]">
            <path d="M1 4V1h3M9 1h3v3M12 9v3H9M4 12H1V9" stroke="#fff" />
          </Svg>
        </div>
      </div>
      <Ribbon />
      {/* Body */}
      <div className="flex min-h-0 flex-1">
        <LeftPanels />
        <div className="ml-[6px] flex min-w-0 flex-1 flex-col pb-[4px] pr-[2px]">
          <div className="mt-[4px] flex h-[29px] shrink-0 items-center text-[14px]">
            <div className="flex h-full w-[92px] items-center bg-[#a8a8a8] pl-[15px] text-[#ededed]">
              天河区
              <X size={11} strokeWidth={3} className="ml-[13px]" />
            </div>
            <span className="ml-[13px] text-[#555]">起始页</span>
            <span className="ml-auto flex pr-[7px]"><Caret /></span>
          </div>
          <div className="h-[3px] shrink-0 bg-[#aaa]" />
          <MapCanvas />
        </div>
      </div>
      <BackDialog />
      <FrontDialog />
      <ContextMenu />
      {/* hand-drawn mark over the menu */}
      <svg className="absolute left-[625px] top-[745px]" width="115" height="55" viewBox="625 745 115 55" fill="none">
        <path
          d="M639 778c0-10 3-17 14-23 7-3 14-4 20-3 11 1 20 4 27 6 10 3 20 8 24 15 5 7 8 11 3 15-6 3-12 5-20 5-12 0-23-1-34-1-12 0-27 0-33-1-4-2-7-4-8-9v-10"
          stroke="#0a0ae0"
          strokeWidth="2.5"
          strokeLinecap="round"
        />
      </svg>
    </div>
  );
}
